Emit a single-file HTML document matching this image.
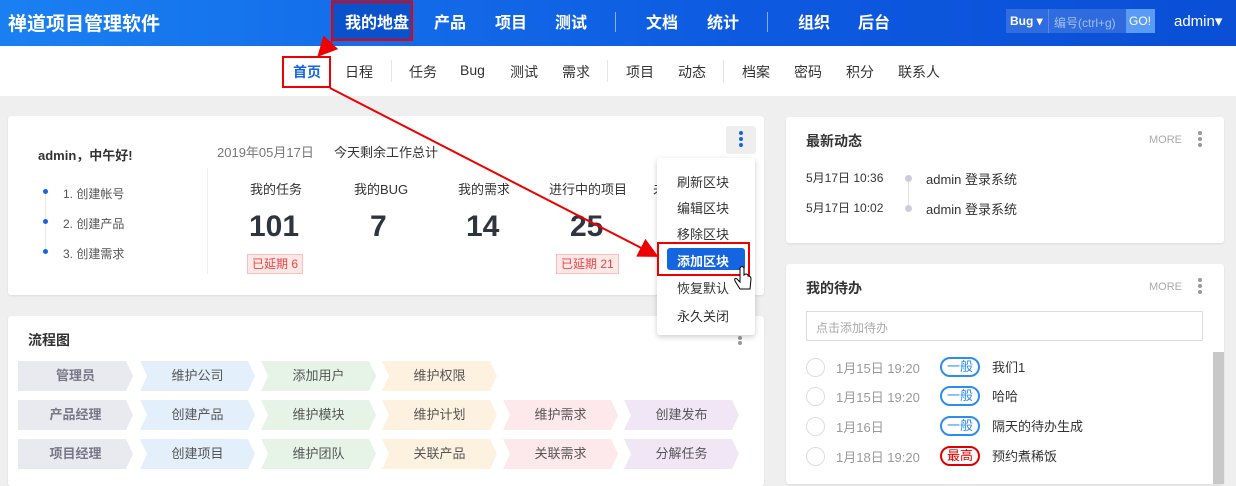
<!DOCTYPE html>
<html><head><meta charset="utf-8">
<style>
*{margin:0;padding:0;box-sizing:border-box}
body{width:1236px;height:473px;overflow:hidden;background:#efefef;font-family:"Liberation Sans","Noto Sans CJK SC",sans-serif;color:#333;position:relative}
.a{position:absolute;white-space:nowrap}
.top{position:absolute;left:0;top:0;width:1236px;height:46px;background:linear-gradient(90deg,#1a80f2,#0d5ae0 60%,#0a4fd6)}
.top .a{color:#fff;font-size:16px;top:9px;font-weight:bold}
.sub{position:absolute;left:0;top:46px;width:1236px;height:50px;background:#fff}
.sub .a{font-size:14px;top:16px;color:#333}
.sep{position:absolute;width:1px;background:#e5e5e5}
.card{position:absolute;background:#fff;border-radius:3px;box-shadow:0 1px 2px rgba(0,0,0,.08)}
.chev{position:absolute;height:30px;width:115px;clip-path:polygon(0 0,108px 0,115px 50%,108px 100%,0 100%,7px 50%);font-size:13px;color:#555;text-align:center;line-height:30px}
.first{clip-path:polygon(0 0,108px 0,115px 50%,108px 100%,0 100%)}
.dd .a{font-size:13px;color:#333;left:20px}
.badge{position:absolute;width:40px;height:20px;border:2px solid #2d8cf0;border-radius:10px;color:#2d8cf0;font-size:13px;text-align:center;line-height:16px}
.circ{position:absolute;width:19px;height:19px;border:1px solid #ddd;border-radius:50%}
</style></head><body>
<div class="top">
 <div class="a" style="left:8px;top:9px;font-size:19px">禅道项目管理软件</div>
 <div style="position:absolute;left:331px;top:0;width:82px;height:41px;background:#0a52cc"></div>
 <div class="a" style="left:345px">我的地盘</div>
 <div class="a" style="left:434px">产品</div>
 <div class="a" style="left:495px">项目</div>
 <div class="a" style="left:555px">测试</div>
 <div style="position:absolute;left:615px;top:12px;width:1px;height:20px;background:rgba(255,255,255,.5)"></div>
 <div class="a" style="left:646px">文档</div>
 <div class="a" style="left:707px">统计</div>
 <div style="position:absolute;left:767px;top:12px;width:1px;height:20px;background:rgba(255,255,255,.5)"></div>
 <div class="a" style="left:798px">组织</div>
 <div class="a" style="left:858px">后台</div>
 <div style="position:absolute;left:1006px;top:9px;width:120px;height:24px;background:rgba(255,255,255,.15)"></div>
 <div class="a" style="left:1010px;top:14px;font-size:12px">Bug ▾</div>
 <div style="position:absolute;left:1048px;top:9px;width:1px;height:24px;background:rgba(255,255,255,.2)"></div>
 <div class="a" style="left:1054px;top:14px;font-size:12px;font-weight:normal;color:rgba(255,255,255,.55)">编号(ctrl+g)</div>
 <div style="position:absolute;left:1126px;top:9px;width:29px;height:24px;background:#5a9cf5"></div>
 <div class="a" style="left:1129px;top:14px;font-size:12px;font-weight:normal">GO!</div>
 <div class="a" style="left:1174px;top:12px;font-size:15px;font-weight:normal">admin▾</div>
</div>
<div style="position:absolute;left:331px;top:1px;width:82px;height:40px;border:2px solid #e00"></div>
<div class="sub">
 <div class="a" style="left:293px;color:#1565e0;font-weight:bold">首页</div>
 <div class="a" style="left:345px">日程</div>
 <div class="sep" style="left:391px;top:14px;height:22px"></div>
 <div class="a" style="left:409px">任务</div>
 <div class="a" style="left:460px">Bug</div>
 <div class="a" style="left:510px">测试</div>
 <div class="a" style="left:562px">需求</div>
 <div class="sep" style="left:607px;top:14px;height:22px"></div>
 <div class="a" style="left:626px">项目</div>
 <div class="a" style="left:678px">动态</div>
 <div class="sep" style="left:723px;top:14px;height:22px"></div>
 <div class="a" style="left:742px">档案</div>
 <div class="a" style="left:794px">密码</div>
 <div class="a" style="left:846px">积分</div>
 <div class="a" style="left:898px">联系人</div>
</div>
<div style="position:absolute;left:282px;top:56px;width:49px;height:32px;border:2px solid #e00"></div>

<div class="card" style="left:8px;top:116px;width:756px;height:179px">
 <div class="a" style="left:30px;top:29px;font-size:13px;font-weight:bold">admin，中午好!</div>
 <div class="a" style="left:209px;top:26px;font-size:13px;color:#777">2019年05月17日</div>
 <div class="a" style="left:326px;top:26px;font-size:13px">今天剩余工作总计</div>
 <div class="sep" style="left:199px;top:52px;height:106px;background:#eee"></div>
 <div class="sep" style="left:37px;top:76px;height:60px;background:#e8e8e8"></div>
 <div style="position:absolute;left:35px;top:73px;width:5px;height:5px;border-radius:50%;background:#1565e0"></div>
 <div style="position:absolute;left:35px;top:103px;width:5px;height:5px;border-radius:50%;background:#1565e0"></div>
 <div style="position:absolute;left:35px;top:133px;width:5px;height:5px;border-radius:50%;background:#1565e0"></div>
 <div class="a" style="left:55px;top:69px;font-size:12px;color:#555">1. 创建帐号</div>
 <div class="a" style="left:55px;top:99px;font-size:12px;color:#555">2. 创建产品</div>
 <div class="a" style="left:55px;top:129px;font-size:12px;color:#555">3. 创建需求</div>
 <div class="a" style="left:242px;top:63px;font-size:13px">我的任务</div>
 <div class="a" style="left:346px;top:63px;font-size:13px">我的BUG</div>
 <div class="a" style="left:450px;top:63px;font-size:13px">我的需求</div>
 <div class="a" style="left:541px;top:63px;font-size:13px">进行中的项目</div>
 <div class="a" style="left:645px;top:63px;font-size:13px">未</div>
 <div class="a" style="left:241px;top:94px;font-size:30px;font-weight:bold;color:#2e3440">101</div>
 <div class="a" style="left:362px;top:94px;font-size:30px;font-weight:bold;color:#2e3440">7</div>
 <div class="a" style="left:458px;top:94px;font-size:30px;font-weight:bold;color:#2e3440">14</div>
 <div class="a" style="left:562px;top:94px;font-size:30px;font-weight:bold;color:#2e3440">25</div>
 <div class="a" style="left:239px;top:138px;height:20px;padding:0 4px;border:1px solid #f8c0c0;background:#fde8e8;color:#e44;font-size:12px;line-height:18px">已延期 6</div>
 <div class="a" style="left:548px;top:138px;height:20px;padding:0 4px;border:1px solid #f8c0c0;background:#fde8e8;color:#e44;font-size:12px;line-height:18px">已延期 21</div>
 <div style="position:absolute;left:718px;top:10px;width:30px;height:28px;background:#eee;border-radius:3px"></div>
 <div style="position:absolute;left:731px;top:15px;width:4px;height:4px;border-radius:50%;background:#1565e0;box-shadow:0 6px 0 #1565e0,0 12px 0 #1565e0"></div>
</div>

<div class="card" style="left:8px;top:316px;width:756px;height:170px">
 <div class="a" style="left:20px;top:14px;font-size:14px;font-weight:bold">流程图</div>
 <div style="position:absolute;left:730px;top:20px;width:4px;height:4px;border-radius:50%;background:#999;box-shadow:0 5px 0 #999"></div>
</div>
<div class="chev first" style="left:18px;top:361px;background:#e8eaef;color:#778;font-weight:bold">管理员</div>
<div class="chev" style="left:140px;top:361px;background:#e3f0fc">维护公司</div>
<div class="chev" style="left:261px;top:361px;background:#e6f4e8">添加用户</div>
<div class="chev" style="left:382px;top:361px;background:#fdf1e0">维护权限</div>
<div class="chev first" style="left:18px;top:400px;background:#e8eaef;color:#778;font-weight:bold">产品经理</div>
<div class="chev" style="left:140px;top:400px;background:#e3f0fc">创建产品</div>
<div class="chev" style="left:261px;top:400px;background:#e6f4e8">维护模块</div>
<div class="chev" style="left:382px;top:400px;background:#fdf1e0">维护计划</div>
<div class="chev" style="left:503px;top:400px;background:#fde8ec">维护需求</div>
<div class="chev" style="left:624px;top:400px;background:#f0e6f6">创建发布</div>
<div class="chev first" style="left:18px;top:439px;background:#e8eaef;color:#778;font-weight:bold">项目经理</div>
<div class="chev" style="left:140px;top:439px;background:#e3f0fc">创建项目</div>
<div class="chev" style="left:261px;top:439px;background:#e6f4e8">维护团队</div>
<div class="chev" style="left:382px;top:439px;background:#fdf1e0">关联产品</div>
<div class="chev" style="left:503px;top:439px;background:#fde8ec">关联需求</div>
<div class="chev" style="left:624px;top:439px;background:#f0e6f6">分解任务</div>

<div class="card" style="left:786px;top:117px;width:438px;height:126px">
 <div class="a" style="left:20px;top:14px;font-size:14px;font-weight:bold">最新动态</div>
 <div class="a" style="left:363px;top:17px;font-size:11px;color:#aaa">MORE</div>
 <div style="position:absolute;left:412px;top:14px;width:4px;height:4px;border-radius:50%;background:#999;box-shadow:0 6px 0 #999,0 12px 0 #999"></div>
 <div class="a" style="left:20px;top:52px;font-size:12px">5月17日 10:36</div>
 <div class="a" style="left:20px;top:82px;font-size:12px">5月17日 10:02</div>
 <div class="sep" style="left:122px;top:62px;height:30px;background:#e5e5e5"></div>
 <div style="position:absolute;left:119px;top:58px;width:7px;height:7px;border-radius:50%;background:#ccd"></div>
 <div style="position:absolute;left:119px;top:88px;width:7px;height:7px;border-radius:50%;background:#ccd"></div>
 <div class="a" style="left:140px;top:52px;font-size:13px">admin 登录系统</div>
 <div class="a" style="left:140px;top:82px;font-size:13px">admin 登录系统</div>
</div>
<div class="card" style="left:786px;top:264px;width:438px;height:220px">
 <div class="a" style="left:20px;top:14px;font-size:14px;font-weight:bold">我的待办</div>
 <div class="a" style="left:363px;top:17px;font-size:11px;color:#aaa">MORE</div>
 <div style="position:absolute;left:412px;top:14px;width:4px;height:4px;border-radius:50%;background:#999;box-shadow:0 6px 0 #999,0 12px 0 #999"></div>
 <div style="position:absolute;left:20px;top:47px;width:397px;height:30px;border:1px solid #ddd"></div>
 <div class="a" style="left:30px;top:55px;font-size:12px;color:#aaa">点击添加待办</div>
 <div style="position:absolute;left:427px;top:88px;width:11px;height:132px;background:#c8c8c8"></div>
</div>
<div class="circ" style="left:806px;top:358px"></div>
<div class="circ" style="left:806px;top:387px"></div>
<div class="circ" style="left:806px;top:417px"></div>
<div class="circ" style="left:806px;top:447px"></div>
<div class="a" style="left:836px;top:358px;font-size:13px;color:#999">1月15日 19:20</div>
<div class="a" style="left:836px;top:387px;font-size:13px;color:#999">1月15日 19:20</div>
<div class="a" style="left:836px;top:417px;font-size:13px;color:#999">1月16日</div>
<div class="a" style="left:836px;top:447px;font-size:13px;color:#999">1月18日 19:20</div>
<div class="badge" style="left:940px;top:357px">一般</div>
<div class="badge" style="left:940px;top:386px">一般</div>
<div class="badge" style="left:940px;top:416px">一般</div>
<div class="badge" style="left:940px;top:446px;border-color:#d00;color:#d00">最高</div>
<div class="a" style="left:992px;top:357px;font-size:13px">我们1</div>
<div class="a" style="left:992px;top:386px;font-size:13px">哈哈</div>
<div class="a" style="left:992px;top:416px;font-size:13px">隔天的待办生成</div>
<div class="a" style="left:992px;top:446px;font-size:13px">预约煮稀饭</div>

<div class="card dd" style="left:657px;top:158px;width:98px;height:177px;box-shadow:0 2px 6px rgba(0,0,0,.2)">
 <div class="a" style="top:14px">刷新区块</div>
 <div class="a" style="top:40px">编辑区块</div>
 <div class="a" style="top:66px">移除区块</div>
 <div style="position:absolute;left:10px;top:90px;width:78px;height:22px;background:#1565e0;border-radius:3px"></div>
 <div class="a" style="top:93px;color:#fff;font-weight:bold">添加区块</div>
 <div class="a" style="top:120px">恢复默认</div>
 <div class="a" style="top:148px">永久关闭</div>
</div>
<div style="position:absolute;left:657px;top:242px;width:93px;height:34px;border:2px solid #e00"></div>

<svg style="position:absolute;left:0;top:0" width="1236" height="473">
 <defs><marker id="ar" markerWidth="10" markerHeight="10" refX="8" refY="5" orient="auto"><path d="M0,0 L10,5 L0,10 z" fill="#e00"/></marker></defs>
 <line x1="332" y1="41" x2="320" y2="54" stroke="#e00" stroke-width="2" marker-end="url(#ar)"/>
 <line x1="330" y1="88" x2="655" y2="255" stroke="#e00" stroke-width="2" marker-end="url(#ar)"/>
 <path d="M740 268 v14 l-3 -3 q-3 -2 -2 2 l5 8 h10 l1 -10 q0 -3 -3 -3 v-1 q-2 -2 -4 0 v-7 q-2 -3 -4 0z" fill="#fff" stroke="#000" stroke-width="1"/>
</svg>
</body></html>
